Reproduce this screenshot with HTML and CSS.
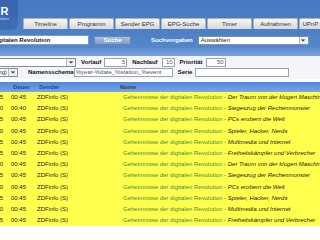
FILE: index.html
```html
<!DOCTYPE html>
<html>
<head>
    <title>Recording Service - Suche</title>
    <meta charset="utf-8">
    <link rel="stylesheet" href="styles.css">
</head>
<body>
    <div class="header">
        <div class="topbar">
            <div class="logo">
                <span class="logo-name">RECORDER</span>
                <span class="logo-sub">service web interface</span>
            </div>
            <ul class="tabs">
                <li>Timeline</li>
                <li>Programm</li>
                <li>Sender EPG</li>
                <li>EPG-Suche</li>
                <li>Timer</li>
                <li>Aufnahmen</li>
                <li>UPnP Dateien</li>
            </ul>
        </div>
        <div class="searchbar">
            <input class="search-input" type="text" value="Geheimnisse der digitalen Revolution">
            <button class="search-btn">Suche</button>
            <label class="search-label">Suchvorgaben</label>
            <div class="select select-presets">Auswählen<span class="arrow">&#8964;</span></div>
        </div>
        <div class="strip"></div>
    </div>

    <div class="options">
        <div class="opt-row">
            <div class="select select-a"><span class="arrow">&#8964;</span></div>
            <label>Vorlauf</label>
            <input class="num num-pre" type="text" value="5">
            <label>Nachlauf</label>
            <input class="num num-post" type="text" value="10">
            <label>Priorität</label>
            <input class="num num-prio" type="text" value="50">
        </div>
        <div class="opt-row">
            <div class="select select-b"><span class="sel-text">Einstellung)</span><span class="arrow">&#8964;</span></div>
            <label class="lbl-scheme">Namensschema</label>
            <input class="txt txt-scheme" type="text" value="%year-%date_%station_%event">
            <label>Serie</label>
            <input class="txt txt-serie" type="text" value="">
        </div>
    </div>

    <div class="results">
        <div class="row head">
            <span class="c-start"></span><span class="c-dur">Dauer</span><span class="c-sender">Sender</span><span class="c-name">Name</span>
        </div>
        <div class="row"><span class="c-start">20:15</span><span class="c-dur">00:45</span><span class="c-sender">ZDFinfo (S)</span><span class="c-name"><span class="title">Geheimnisse der digitalen Revolution</span> - <em>Der Traum von der klugen Maschine</em></span></div>
        <div class="row"><span class="c-start">21:00</span><span class="c-dur">00:40</span><span class="c-sender">ZDFinfo (S)</span><span class="c-name"><span class="title">Geheimnisse der digitalen Revolution</span> - <em>Siegeszug der Rechenmonster</em></span></div>
        <div class="row"><span class="c-start">21:45</span><span class="c-dur">00:45</span><span class="c-sender">ZDFinfo (S)</span><span class="c-name"><span class="title">Geheimnisse der digitalen Revolution</span> - <em>PCs erobern die Welt</em></span></div>
        <div class="row"><span class="c-start">22:30</span><span class="c-dur">00:45</span><span class="c-sender">ZDFinfo (S)</span><span class="c-name"><span class="title">Geheimnisse der digitalen Revolution</span> - <em>Spieler, Hacker, Nerds</em></span></div>
        <div class="row"><span class="c-start">23:15</span><span class="c-dur">00:45</span><span class="c-sender">ZDFinfo (S)</span><span class="c-name"><span class="title">Geheimnisse der digitalen Revolution</span> - <em>Multimedia und Internet</em></span></div>
        <div class="row"><span class="c-start">00:05</span><span class="c-dur">00:45</span><span class="c-sender">ZDFinfo (S)</span><span class="c-name"><span class="title">Geheimnisse der digitalen Revolution</span> - <em>Freiheitskämpfer und Verbrecher</em></span></div>
        <div class="row"><span class="c-start">10:30</span><span class="c-dur">00:45</span><span class="c-sender">ZDFinfo (S)</span><span class="c-name"><span class="title">Geheimnisse der digitalen Revolution</span> - <em>Der Traum von der klugen Maschine</em></span></div>
        <div class="row"><span class="c-start">11:15</span><span class="c-dur">00:45</span><span class="c-sender">ZDFinfo (S)</span><span class="c-name"><span class="title">Geheimnisse der digitalen Revolution</span> - <em>Siegeszug der Rechenmonster</em></span></div>
        <div class="row"><span class="c-start">12:00</span><span class="c-dur">00:45</span><span class="c-sender">ZDFinfo (S)</span><span class="c-name"><span class="title">Geheimnisse der digitalen Revolution</span> - <em>PCs erobern die Welt</em></span></div>
        <div class="row"><span class="c-start">12:45</span><span class="c-dur">00:45</span><span class="c-sender">ZDFinfo (S)</span><span class="c-name"><span class="title">Geheimnisse der digitalen Revolution</span> - <em>Spieler, Hacker, Nerds</em></span></div>
        <div class="row"><span class="c-start">13:30</span><span class="c-dur">00:45</span><span class="c-sender">ZDFinfo (S)</span><span class="c-name"><span class="title">Geheimnisse der digitalen Revolution</span> - <em>Multimedia und Internet</em></span></div>
        <div class="row"><span class="c-start">14:15</span><span class="c-dur">00:45</span><span class="c-sender">ZDFinfo (S)</span><span class="c-name"><span class="title">Geheimnisse der digitalen Revolution</span> - <em>Freiheitskämpfer und Verbrecher</em></span></div>
    </div>
</body>
</html>
```
FILE: styles.css
```css
html, body {
    margin: 0;
    padding: 0;
    overflow: hidden;
    background-color: #fff;
    font-family: "Liberation Sans", Arial, sans-serif;
    font-size: 6px;
    color: #111;
}
input, button {
    font-family: inherit;
    font-size: 6px;
    margin: 0;
}
.header {
    background: linear-gradient(#4677c0, #4e80c6 60%, #5a8bcd);
}
.topbar {
    display: flex;
    align-items: flex-end;
    height: 30px;
}
.logo {
    flex-shrink: 0;
    display: flex;
    flex-direction: column;
    align-items: flex-end;
    margin-left: -40px;
    width: 58px;
    height: 30px;
    padding-top: 6px;
    box-sizing: border-box;
    background: linear-gradient(#3863ad, #3f6db6);
    border-bottom-right-radius: 6px;
    color: #fff;
    overflow: hidden;
}
.logo-name {
    font-size: 11px;
    font-weight: bold;
    letter-spacing: 0.5px;
    line-height: 11px;
    margin-right: 9px;
}
.logo-sub {
    font-size: 3px;
    color: #cfe0f7;
    margin-right: 9px;
    white-space: nowrap;
}
.tabs {
    display: flex;
    gap: 1px;
    list-style: none;
    margin: 0 0 1px 5px;
    padding: 0;
}
.tabs li {
    flex-shrink: 0;
    width: 43px;
    height: 10px;
    line-height: 10px;
    text-align: center;
    white-space: nowrap;
    overflow: hidden;
    color: #333;
    background: linear-gradient(#f6f6f6, #d8d8d8);
    border: 1px solid #a9b3c2;
    border-bottom: none;
    border-radius: 2px 2px 0 0;
}
.searchbar {
    display: flex;
    align-items: center;
    height: 16px;
    padding-top: 2px;
}
.search-input {
    flex-shrink: 0;
    width: 143px;
    height: 8px;
    margin-left: -60px;
    padding: 0 2px;
    border: 1px solid #7f9cc9;
    font-weight: bold;
    color: #222;
}
.search-btn {
    width: 37px;
    height: 9px;
    margin-left: 5px;
    padding: 0;
    border: 1px solid #6a86b3;
    background: linear-gradient(#a9bfdf, #7e9ccb);
    color: #fff;
    font-weight: bold;
    line-height: 7px;
}
.search-label {
    margin-left: 20px;
    color: #fff;
    font-weight: bold;
}
.select {
    flex-shrink: 0;
    position: relative;
    height: 7px;
    line-height: 7px;
    padding: 0 2px;
    background: #fff;
    border: 1px solid #7f8fa8;
    white-space: nowrap;
    overflow: hidden;
    color: #222;
}
.arrow {
    position: absolute;
    right: 1px;
    top: 0;
    width: 7px;
    height: 7px;
    line-height: 3px;
    text-align: center;
    font-size: 7px;
    font-weight: bold;
    background: #eee;
    border-left: 1px solid #bbb;
}
.select-presets {
    width: 105px;
    margin-left: 5px;
}
.strip {
    height: 8px;
    background: linear-gradient(#5c8dce, #7aa3da);
}
.options {
    padding: 1px 0 2px;
    background: #f3f5f9;
}
.opt-row {
    display: flex;
    align-items: center;
    height: 10px;
}
.opt-row label {
    font-weight: bold;
    color: #111;
    margin: 0 3px 0 5px;
}
.opt-row input {
    flex-shrink: 0;
    height: 7px;
    padding: 0 1px;
    border: 1px solid #9aa3b0;
    color: #555;
}
.num {
    text-align: right;
}
.num-pre {
    width: 19px;
}
.num-post {
    width: 9px;
    margin-left: 1px;
}
.num-prio {
    width: 16px;
}
.select-a {
    width: 110px;
    margin-left: -40px;
}
.select-b {
    display: flex;
    justify-content: flex-end;
    width: 44px;
    margin-left: -40px;
    padding-right: 10px;
}
.sel-text {
    flex-shrink: 0;
}
.opt-row .lbl-scheme {
    margin-left: 10px;
}
.txt-scheme {
    width: 95px;
    margin-left: -3px;
}
.txt-serie {
    width: 90px;
}
.results {
    margin-left: -16px;
    margin-top: 3px;
}
.row {
    display: flex;
    height: 11.2px;
    line-height: 11.2px;
    white-space: nowrap;
    background: #ffff4d;
    color: #222;
}
.row.head {
    height: 10px;
    line-height: 10px;
    font-weight: bold;
    color: #1c47a0;
    background: linear-gradient(#4f86d6, #7aa7e6);
}
.c-start {
    flex-shrink: 0;
    width: 19px;
    padding-right: 8px;
    text-align: right;
    overflow: hidden;
}
.c-dur {
    flex-shrink: 0;
    width: 26px;
}
.c-sender {
    flex-shrink: 0;
    width: 86px;
}
.head .c-dur,
.head .c-sender {
    padding-left: 2px;
    margin-right: -2px;
}
.head .c-name {
    padding-left: 0;
    margin-left: -3px;
}
.c-name {
    color: #444;
}
.title {
    color: #3f8b3f;
}
.c-name em {
    color: #222;
}
```
